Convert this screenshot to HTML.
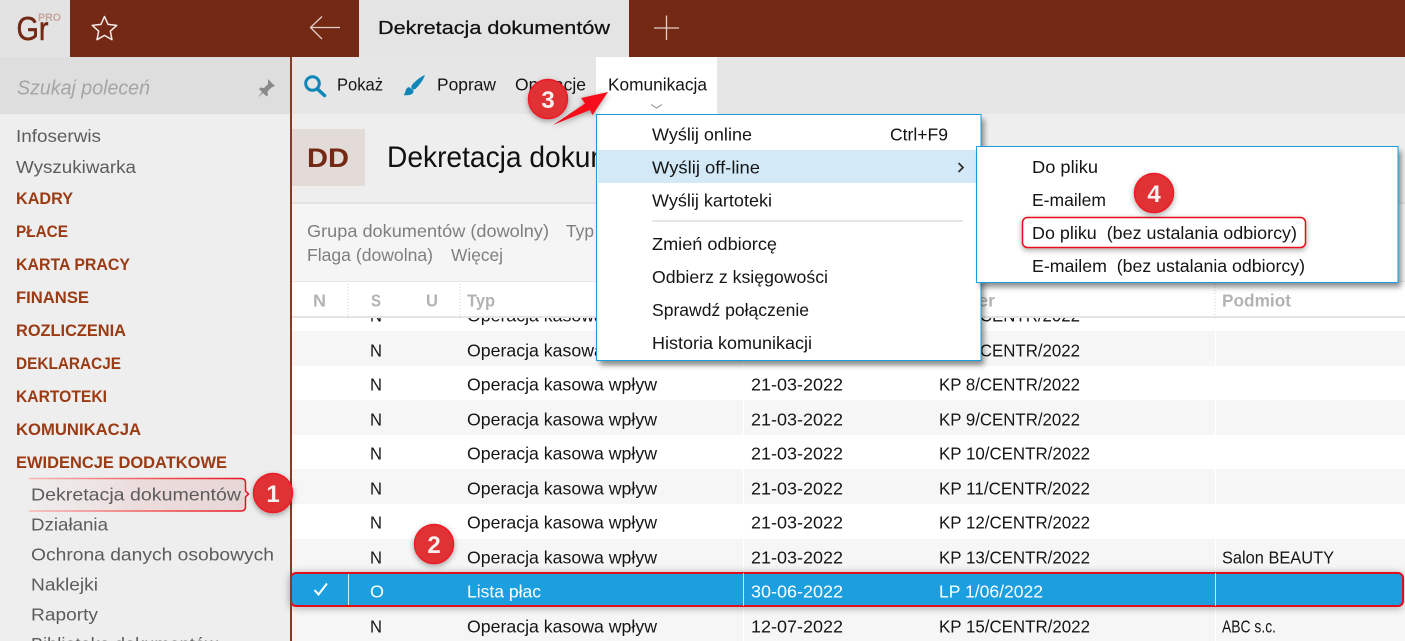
<!DOCTYPE html>
<html lang="pl"><head><meta charset="utf-8"><title>Dekretacja dokumentów</title>
<style>
html,body{margin:0;padding:0;width:1405px;height:641px;overflow:hidden;background:#fff}
svg{display:block}
text{font-family:"Liberation Sans","DejaVu Sans",sans-serif;font-size:17.5px;fill:#151515}
.s{fill:#5c5c5c}
.h{fill:#9b3b14;font-weight:bold;font-size:16.5px}
.g{fill:#7f7f7f}
.c{fill:#b3b3b3;font-weight:bold}
.w{fill:#fff}
.b{fill:#f7f0ef;font-size:24px;font-weight:bold;text-anchor:middle}
</style></head><body>
<svg xmlns="http://www.w3.org/2000/svg" width="1405" height="641" viewBox="0 0 1405 641">
<defs>
<filter id="sh" x="-10%" y="-10%" width="125%" height="125%"><feDropShadow dx="3" dy="4" stdDeviation="3" flood-color="#000" flood-opacity=".45"/></filter>
<filter id="bs" x="-40%" y="-40%" width="200%" height="200%"><feDropShadow dx="0" dy="2" stdDeviation="3" flood-color="#000" flood-opacity=".35"/></filter>
<filter id="rs" x="-5%" y="-40%" width="110%" height="200%"><feDropShadow dx="0" dy="1" stdDeviation="4" flood-color="#000" flood-opacity=".35"/></filter>
<linearGradient id="cf" x1="0" x2="1" y1="0" y2="0"><stop offset="0" stop-color="#f0e4e4" stop-opacity=".2"/><stop offset=".5" stop-color="#ecdcdc"/><stop offset="1" stop-color="#e8d6d6"/></linearGradient>
<linearGradient id="cs" x1="0" x2="1" y1="0" y2="0"><stop offset="0" stop-color="#f6b8b8"/><stop offset=".7" stop-color="#f04040"/><stop offset="1" stop-color="#e8101e"/></linearGradient>
</defs>

<!-- backgrounds -->
<rect width="1405" height="641" fill="#fff"/>
<rect x="0" y="0" width="290" height="641" fill="#eeeeee"/>
<rect x="0" y="57" width="290" height="57" fill="#dedede"/>
<rect x="292" y="57" width="1113" height="57" fill="#e6e6e6"/>
<rect x="292" y="114" width="1113" height="89" fill="#eeeeee"/>
<rect x="292" y="203" width="1113" height="79" fill="#f5f5f5"/>
<rect x="292" y="202" width="1113" height="2" fill="#e2e2e2"/>

<!-- top bar -->
<rect x="0" y="0" width="1405" height="57" fill="#732914"/>
<rect x="0" y="0" width="70" height="57" fill="#e3e3e3"/>
<rect x="359" y="0" width="270" height="57" fill="#e4e4e4"/>
<text x="16.500" y="40" style="font-size:33px;fill:#732914;stroke:#732914;stroke-width:.5" textLength="32" lengthAdjust="spacingAndGlyphs">Gr</text>
<text x="38" y="21" style="font-size:11px;font-weight:bold;fill:#c7a69c" textLength="23" lengthAdjust="spacingAndGlyphs">PRO</text>
<path d="M104.500 16.500l3.600 7.900 8.600 1-6.400 5.800 1.700 8.500-7.500-4.300-7.500 4.300 1.700-8.500-6.400-5.800 8.600-1z" fill="none" stroke="#f4ecea" stroke-width="1.500" stroke-linejoin="round"/>
<path d="M340 27.500H311M322 16.500L310.500 27.500 322 39" fill="none" stroke="#e3cfc9" stroke-width="1.300"/>
<text x="378" y="34" style="font-size:18.500px;fill:#111;stroke:#111;stroke-width:.25" textLength="232" lengthAdjust="spacingAndGlyphs">Dekretacja dokumentów</text>
<path d="M654 28H679M666.500 15.500V40" fill="none" stroke="#e3cfc9" stroke-width="1.300"/>

<!-- sidebar -->
<text x="17" y="94.500" style="font-size:20px;font-style:italic;fill:#a5a5a5" textLength="133" lengthAdjust="spacingAndGlyphs">Szukaj poleceń</text>
<path d="M268 79l7 7-3.500 1.500-4 4 .5 3.500-1.500 1.500-3.500-3.500-5 4.500 4-5.500-3-3 1.500-1.500 3.500.5 4-4z" fill="#8a8a8a"/>
<text class="s" x="16" y="142" textLength="85" lengthAdjust="spacingAndGlyphs">Infoserwis</text>
<text class="s" x="16" y="173" textLength="120" lengthAdjust="spacingAndGlyphs">Wyszukiwarka</text>
<text class="h" x="16" y="204" textLength="57" lengthAdjust="spacingAndGlyphs">KADRY</text>
<text class="h" x="16" y="237" textLength="52" lengthAdjust="spacingAndGlyphs">PŁACE</text>
<text class="h" x="16" y="270" textLength="114" lengthAdjust="spacingAndGlyphs">KARTA PRACY</text>
<text class="h" x="16" y="303" textLength="73" lengthAdjust="spacingAndGlyphs">FINANSE</text>
<text class="h" x="16" y="336" textLength="110" lengthAdjust="spacingAndGlyphs">ROZLICZENIA</text>
<text class="h" x="16" y="369" textLength="105" lengthAdjust="spacingAndGlyphs">DEKLARACJE</text>
<text class="h" x="16" y="402" textLength="91" lengthAdjust="spacingAndGlyphs">KARTOTEKI</text>
<text class="h" x="16" y="435" textLength="125" lengthAdjust="spacingAndGlyphs">KOMUNIKACJA</text>
<text class="h" x="16" y="468" textLength="211" lengthAdjust="spacingAndGlyphs">EWIDENCJE DODATKOWE</text>
<path d="M29 478.500H241q4.500 0 4.500 4.500V491l3 3-3 3v9.500q0 4.500-4.500 4.500H29" fill="url(#cf)" stroke="url(#cs)" stroke-width="1.500"/>
<text class="s" x="31" y="500.500" textLength="210" lengthAdjust="spacingAndGlyphs">Dekretacja dokumentów</text>
<text class="s" x="31" y="530.500" textLength="77" lengthAdjust="spacingAndGlyphs">Działania</text>
<text class="s" x="31" y="560.500" textLength="243" lengthAdjust="spacingAndGlyphs">Ochrona danych osobowych</text>
<text class="s" x="31" y="590.500" textLength="67" lengthAdjust="spacingAndGlyphs">Naklejki</text>
<text class="s" x="31" y="620.500" textLength="67" lengthAdjust="spacingAndGlyphs">Raporty</text>
<text class="s" x="31" y="650" textLength="187" lengthAdjust="spacingAndGlyphs">Biblioteka dokumentów</text>

<!-- toolbar -->
<circle cx="312.500" cy="83.500" r="6.800" fill="none" stroke="#0e86b8" stroke-width="3"/>
<path d="M317.500 89l7 6.500" stroke="#0e86b8" stroke-width="3.500" stroke-linecap="round"/>
<text x="337" y="90.500" textLength="46" lengthAdjust="spacingAndGlyphs">Pokaż</text>
<path d="M425 75c-3 1-9 5-13 10-1 1.500-1 3 0 4s3 .5 4-.5c4-4 8-10 9-13.500zM409 87c-2 .5-3 2-3.500 4-.5 2-1 3-2 4 3 .5 7 .5 9-1.500 1-1 1.500-2.500.5-3.500z" fill="#0e86b8"/>
<text x="437" y="90.500" textLength="59" lengthAdjust="spacingAndGlyphs">Popraw</text>
<text x="515" y="90.500" textLength="71" lengthAdjust="spacingAndGlyphs">Operacje</text>
<rect x="596" y="57" width="121" height="57" fill="#fff"/>
<text x="608" y="90.500" textLength="99" lengthAdjust="spacingAndGlyphs">Komunikacja</text>
<path d="M651 104.500l5.500 3.500 5.500-3.500" fill="none" stroke="#888" stroke-width="1"/>

<!-- title -->
<rect x="292" y="129" width="73" height="57" fill="#e3dbd8"/>
<text x="307" y="167" style="font-size:27px;font-weight:bold;fill:#732914" textLength="42" lengthAdjust="spacingAndGlyphs">DD</text>
<text x="387" y="167" style="font-size:30px;fill:#111" textLength="302" lengthAdjust="spacingAndGlyphs">Dekretacja dokumentów</text>

<!-- filters -->
<text class="g" x="307" y="237" textLength="242" lengthAdjust="spacingAndGlyphs">Grupa dokumentów (dowolny)</text>
<text class="g" x="566" y="237" textLength="28" lengthAdjust="spacingAndGlyphs">Typ</text>
<text class="g" x="307" y="261" textLength="126" lengthAdjust="spacingAndGlyphs">Flaga (dowolna)</text>
<text class="g" x="451" y="261" textLength="52" lengthAdjust="spacingAndGlyphs">Więcej</text>

<!-- rows -->
<rect x="292" y="331" width="1113" height="35" fill="#f6f6f6"/>
<rect x="292" y="400" width="1113" height="35" fill="#f6f6f6"/>
<rect x="292" y="469" width="1113" height="35" fill="#f6f6f6"/>
<rect x="292" y="539" width="1113" height="34" fill="#f6f6f6"/>
<rect x="292" y="608" width="1113" height="33" fill="#f6f6f6"/>
<path d="M743.500 316V641M1215.500 316V641" stroke="#fff" stroke-width="1"/>

<g transform="translate(0,-0.5)">
<text x="370" y="322" textLength="12" lengthAdjust="spacingAndGlyphs">N</text><text x="467" y="322" textLength="190" lengthAdjust="spacingAndGlyphs">Operacja kasowa wpływ</text><text x="939" y="322" textLength="141" lengthAdjust="spacingAndGlyphs">KP 6/CENTR/2022</text>
<text x="370" y="357" textLength="12" lengthAdjust="spacingAndGlyphs">N</text><text x="467" y="357" textLength="190" lengthAdjust="spacingAndGlyphs">Operacja kasowa wpływ</text><text x="939" y="357" textLength="141" lengthAdjust="spacingAndGlyphs">KP 7/CENTR/2022</text>
<text x="370" y="391" textLength="12" lengthAdjust="spacingAndGlyphs">N</text><text x="467" y="391" textLength="190" lengthAdjust="spacingAndGlyphs">Operacja kasowa wpływ</text><text x="751" y="391" textLength="92" lengthAdjust="spacingAndGlyphs">21-03-2022</text><text x="939" y="391" textLength="141" lengthAdjust="spacingAndGlyphs">KP 8/CENTR/2022</text>
<text x="370" y="426" textLength="12" lengthAdjust="spacingAndGlyphs">N</text><text x="467" y="426" textLength="190" lengthAdjust="spacingAndGlyphs">Operacja kasowa wpływ</text><text x="751" y="426" textLength="92" lengthAdjust="spacingAndGlyphs">21-03-2022</text><text x="939" y="426" textLength="141" lengthAdjust="spacingAndGlyphs">KP 9/CENTR/2022</text>
<text x="370" y="460" textLength="12" lengthAdjust="spacingAndGlyphs">N</text><text x="467" y="460" textLength="190" lengthAdjust="spacingAndGlyphs">Operacja kasowa wpływ</text><text x="751" y="460" textLength="92" lengthAdjust="spacingAndGlyphs">21-03-2022</text><text x="939" y="460" textLength="151" lengthAdjust="spacingAndGlyphs">KP 10/CENTR/2022</text>
<text x="370" y="495" textLength="12" lengthAdjust="spacingAndGlyphs">N</text><text x="467" y="495" textLength="190" lengthAdjust="spacingAndGlyphs">Operacja kasowa wpływ</text><text x="751" y="495" textLength="92" lengthAdjust="spacingAndGlyphs">21-03-2022</text><text x="939" y="495" textLength="151" lengthAdjust="spacingAndGlyphs">KP 11/CENTR/2022</text>
<text x="370" y="529" textLength="12" lengthAdjust="spacingAndGlyphs">N</text><text x="467" y="529" textLength="190" lengthAdjust="spacingAndGlyphs">Operacja kasowa wpływ</text><text x="751" y="529" textLength="92" lengthAdjust="spacingAndGlyphs">21-03-2022</text><text x="939" y="529" textLength="151" lengthAdjust="spacingAndGlyphs">KP 12/CENTR/2022</text>
<text x="370" y="564" textLength="12" lengthAdjust="spacingAndGlyphs">N</text><text x="467" y="564" textLength="190" lengthAdjust="spacingAndGlyphs">Operacja kasowa wpływ</text><text x="751" y="564" textLength="92" lengthAdjust="spacingAndGlyphs">21-03-2022</text><text x="939" y="564" textLength="151" lengthAdjust="spacingAndGlyphs">KP 13/CENTR/2022</text><text x="1222" y="564" textLength="112" lengthAdjust="spacingAndGlyphs">Salon BEAUTY</text>
<text x="370" y="633" textLength="12" lengthAdjust="spacingAndGlyphs">N</text><text x="467" y="633" textLength="190" lengthAdjust="spacingAndGlyphs">Operacja kasowa wpływ</text><text x="751" y="633" textLength="92" lengthAdjust="spacingAndGlyphs">12-07-2022</text><text x="939" y="633" textLength="151" lengthAdjust="spacingAndGlyphs">KP 15/CENTR/2022</text><text x="1222" y="633" textLength="54" lengthAdjust="spacingAndGlyphs">ABC s.c.</text>
</g>

<!-- selected row -->
<rect x="291" y="573" width="1112" height="33" rx="5" fill="#1b9fdf" stroke="#e0101e" stroke-width="2" filter="url(#rs)"/>
<path d="M348.500 574V605M743.500 573V606M1215.500 573V606" stroke="#cfeaf8" stroke-width="1"/>
<path d="M314.500 590l4 4.500 8.500-11" fill="none" stroke="#fff" stroke-width="2"/>
<text class="w" x="370" y="597.500" textLength="14" lengthAdjust="spacingAndGlyphs">O</text>
<text class="w" x="467" y="597.500" textLength="74" lengthAdjust="spacingAndGlyphs">Lista płac</text>
<text class="w" x="751" y="597.500" textLength="92" lengthAdjust="spacingAndGlyphs">30-06-2022</text>
<text class="w" x="939" y="597.500" textLength="104" lengthAdjust="spacingAndGlyphs">LP 1/06/2022</text>

<!-- grid header -->
<rect x="292" y="282" width="1113" height="34" fill="#fff"/>
<rect x="292" y="281" width="1113" height="1" fill="#e6e6e6"/>
<rect x="292" y="316" width="1113" height="2" fill="#e4e4e4"/>
<path d="M348 284V318M460 284V318M1215 284V318" stroke="#cfcfcf" stroke-width="1" stroke-dasharray="1 2"/>
<text class="c" x="313" y="306.500" textLength="13" lengthAdjust="spacingAndGlyphs">N</text>
<text class="c" x="371" y="306.500" textLength="10" lengthAdjust="spacingAndGlyphs">S</text>
<text class="c" x="426" y="306.500" textLength="12" lengthAdjust="spacingAndGlyphs">U</text>
<text class="c" x="467" y="306.500" textLength="28" lengthAdjust="spacingAndGlyphs">Typ</text>
<text class="c" x="939" y="306.500" textLength="56" lengthAdjust="spacingAndGlyphs">Numer</text>
<text class="c" x="1222" y="306.500" textLength="69" lengthAdjust="spacingAndGlyphs">Podmiot</text>

<!-- sidebar divider -->
<rect x="290" y="57" width="2" height="584" fill="#8a3a22"/>

<!-- main menu -->
<rect x="597" y="115" width="384" height="246" fill="#fff" filter="url(#sh)"/>
<rect x="596.500" y="114.500" width="384.500" height="246" fill="#fff" stroke="#1a9ddb"/>
<rect x="598" y="150" width="379" height="33" fill="#d3e9f8"/>
<text x="652" y="140.500" textLength="100" lengthAdjust="spacingAndGlyphs">Wyślij online</text>
<text x="890" y="140.500" textLength="58" lengthAdjust="spacingAndGlyphs">Ctrl+F9</text>
<text x="652" y="173.500" textLength="108" lengthAdjust="spacingAndGlyphs">Wyślij off-line</text>
<path d="M958.500 163l4.500 4.500-4.500 4.500" fill="none" stroke="#333" stroke-width="1.800"/>
<text x="652" y="206.500" textLength="120" lengthAdjust="spacingAndGlyphs">Wyślij kartoteki</text>
<rect x="652" y="220" width="311" height="2" fill="#e6e6e6"/>
<text x="652" y="250" textLength="125" lengthAdjust="spacingAndGlyphs">Zmień odbiorcę</text>
<text x="652" y="283" textLength="176" lengthAdjust="spacingAndGlyphs">Odbierz z księgowości</text>
<text x="652" y="316" textLength="157" lengthAdjust="spacingAndGlyphs">Sprawdź połączenie</text>
<text x="652" y="349" textLength="160" lengthAdjust="spacingAndGlyphs">Historia komunikacji</text>

<!-- submenu -->
<rect x="977" y="147" width="421" height="136" fill="#fff" filter="url(#sh)"/>
<rect x="976.500" y="146.500" width="421.500" height="136" fill="#fff" stroke="#1a9ddb"/>
<text x="1032" y="173" textLength="66" lengthAdjust="spacingAndGlyphs">Do pliku</text>
<text x="1032" y="206" textLength="74" lengthAdjust="spacingAndGlyphs">E-mailem</text>
<rect x="1022.500" y="217.500" width="283" height="30" rx="5" fill="#fff" stroke="#e8101e" stroke-width="1.500" filter="url(#bs)"/>
<text x="1032" y="239" textLength="265" lengthAdjust="spacingAndGlyphs">Do pliku&#160; (bez ustalania odbiorcy)</text>
<text x="1032" y="272" textLength="273" lengthAdjust="spacingAndGlyphs">E-mailem&#160; (bez ustalania odbiorcy)</text>

<!-- arrow -->
<path d="M608 92L581 98l4 5.500-32 21.500 37-15 2.500 5z" fill="#f5101c" filter="url(#bs)"/>

<!-- badges -->
<g filter="url(#bs)"><circle cx="273" cy="493" r="19.500" fill="#e03234" stroke="#ee1c25" stroke-width="1.500"/></g>
<text class="b" x="273" y="502">1</text>
<g filter="url(#bs)"><circle cx="434" cy="544" r="19.500" fill="#e03234" stroke="#ee1c25" stroke-width="1.500"/></g>
<text class="b" x="434" y="553">2</text>
<g filter="url(#bs)"><circle cx="548" cy="99" r="19.500" fill="#e03234" stroke="#ee1c25" stroke-width="1.500"/></g>
<text class="b" x="548" y="108">3</text>
<g filter="url(#bs)"><circle cx="1154" cy="193" r="19.500" fill="#e03234" stroke="#ee1c25" stroke-width="1.500"/></g>
<text class="b" x="1154" y="202">4</text>
</svg>
</body></html>
